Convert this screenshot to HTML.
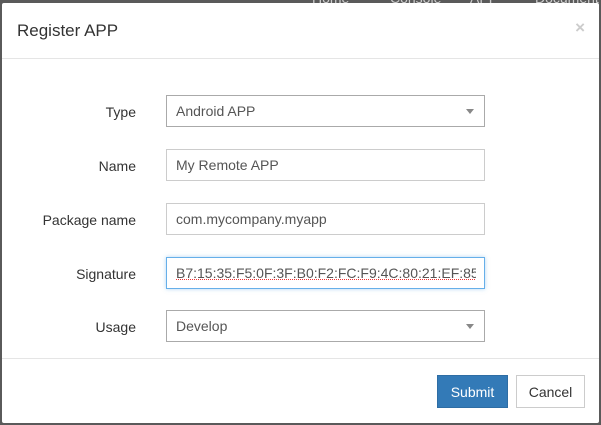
<html><head><style>
body{margin:0;width:601px;height:425px;background:#5a5a5a;position:relative;overflow:hidden;font-family:"Liberation Sans",sans-serif;}
.bg{position:absolute;top:-10px;color:#ccc;font-size:14px}
.m{position:absolute;left:2px;top:3px;width:597px;height:420px;background:#fff;border-radius:2px}
.h{position:absolute;left:0;top:0;width:597px;height:55px;border-bottom:1px solid #e5e5e5}
.t{position:absolute;left:15px;top:18px;font-size:17px;color:#333}
.x{position:absolute;right:14px;top:15px;font-size:17px;color:#ccc;font-weight:bold}
.l{position:absolute;width:134px;text-align:right;font-size:14px;color:#333}
.i{position:absolute;left:164px;width:317px;height:30px;border:1px solid #ccc;font-size:14px;color:#555;box-sizing:content-box;line-height:30px;padding-left:0}
.i span{margin-left:9px;white-space:nowrap;overflow:hidden;display:block;width:300px}
.a{position:absolute;right:10px;top:13px;border-left:4px solid transparent;border-right:4px solid transparent;border-top:5px solid #888}
.f{position:absolute;left:0;top:355px;width:597px;border-top:1px solid #e5e5e5}
.b{position:absolute;top:372px;height:33px;line-height:33px;text-align:center;font-size:14px;box-sizing:border-box}
</style></head><body>
<div class="bg" style="left:312px">Home</div><div class="bg" style="left:390px">Console</div><div class="bg" style="left:470px">API</div><div class="bg" style="left:535px">Document</div>
<div class="m">
<div class="h"><div class="t">Register APP</div><div class="x">×</div></div>
<div class="l" style="top:101px">Type</div>
<div class="i" style="top:92px;border-color:#aaa"><span>Android APP</span><div class="a"></div></div>
<div class="l" style="top:155px">Name</div>
<div class="i" style="top:146px"><span>My Remote APP</span></div>
<div class="l" style="top:209px">Package name</div>
<div class="i" style="top:200px"><span>com.mycompany.myapp</span></div>
<div class="l" style="top:263px">Signature</div>
<div class="i" style="top:254px;border-color:#66afe9;box-shadow:0 0 4px rgba(102,175,233,.5)"><span style="text-decoration:underline dotted #e33;text-decoration-thickness:1px">B7:15:35:F5:0F:3F:B0:F2:FC:F9:4C:80:21:EF:85:8</span></div>
<div class="l" style="top:316px">Usage</div>
<div class="i" style="top:307px;border-color:#aaa"><span>Develop</span><div class="a"></div></div>
<div class="f"></div>
<div class="b" style="left:435px;width:71px;background:#337ab7;color:#fff;border:1px solid #2e6da4">Submit</div>
<div class="b" style="left:514px;width:69px;background:#fff;color:#333;border:1px solid #ccc">Cancel</div>
</div></body></html>
